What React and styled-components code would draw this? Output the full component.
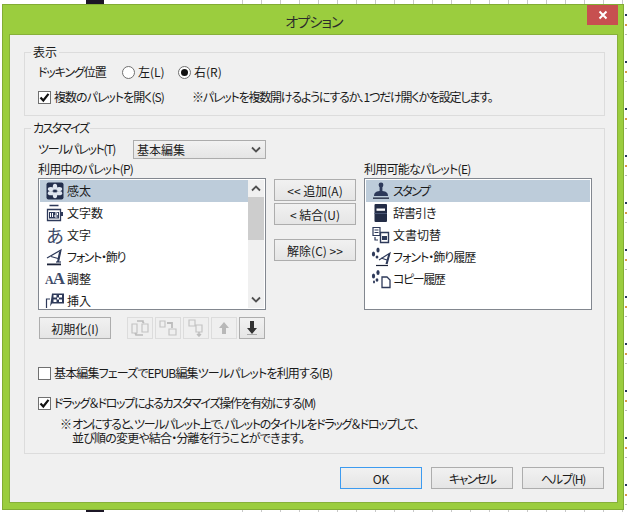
import React from 'react';
import styled, { createGlobalStyle } from 'styled-components';

const Global = createGlobalStyle`
  html, body { margin: 0; padding: 0; background: #fff; }
  * { box-sizing: border-box; }
  body { font-family: "Noto Sans CJK JP", "Noto Sans", sans-serif; font-size: 12px; color: #1a1a1a; font-feature-settings: "palt"; }
`;

const Page = styled.div`
  width: 627px; height: 512px; overflow: hidden;
  padding: 4px 3px 2px 2px;
  background:
    linear-gradient(#1c1626, #1c1626) 86px 0 / 18px 100% no-repeat,
    repeating-linear-gradient(180deg, #fff 0 14px, #2a3a60 14px 16px, #fff 16px 24px, #d69a50 24px 26px, #fff 26px 34px, #bbb 34px 35px, #fff 35px 47px) 625px 0 / 2px 100% no-repeat,
    repeating-linear-gradient(90deg, #c8c8c8 0 1px, #fff 1px 19px) 242px 0 / 385px 100% no-repeat,
    #fff;
`;
const Win = styled.div`
  width: 622px; height: 506px;
  background: #9bcd3e;
  border: 1px solid #82ac34;
  display: flex; flex-direction: column;
`;
const TitleBar = styled.div`
  height: 29px; display: flex; justify-content: flex-end; position: relative;
  padding-right: 5px;
`;
const Title = styled.div`
  position: absolute; left: 0; right: 0; top: 6px; text-align: center;
  font-size: 14px; line-height: 20px; color: #2b2b2b; padding-left: 2px; letter-spacing: -.8px;
`;
const Close = styled.div`
  width: 31px; height: 20px; background: #c75050; color: #fff;
  display: flex; align-items: center; justify-content: center;
`;
const Client = styled.div`
  flex: 1; margin: 0 5px 6px 6px; background: #f0f0f0;
  border: 1px solid #87b03a; padding: 10px 12px 0 14px;
  display: flex; flex-direction: column;
`;
const Group = styled.fieldset`
  margin: 0 0 ${p => p.$gap || 0}px; padding: 0 0 ${p => p.$bottom}px 0; border: 1px solid #dcdcdc; min-width: 0;
`;
const GroupBody = styled.div`padding-left: 13px;`;
const Legend = styled.legend`
  margin-left: 6px; padding: 0 2px; line-height: 14px; height: 14px; font-size: 12px;
  letter-spacing: ${p => p.$ls || 0}px;
`;
const Row = styled.div`
  display: flex; align-items: center; height: 18px; margin-top: ${p => p.$top || 0}px;
`;
const Text = styled.span`
  white-space: nowrap; line-height: 14px; margin-left: ${p => p.$left || 0}px;
  letter-spacing: ${p => p.$ls || 0}px;
  display: inline-block; width: ${p => (p.$w ? p.$w + 'px' : 'auto')};
`;
const BoxShape = styled.span`
  width: 13px; height: 13px; flex: none; border: 1px solid #707070; background: #fff;
  display: flex; align-items: center; justify-content: center;
`;
const RadioShape = styled.span`
  width: 13px; height: 13px; flex: none; border-radius: 50%; border: 1px solid #707070; background: #fff;
  display: flex; align-items: center; justify-content: center;
  &::after { content: ""; width: 7px; height: 7px; border-radius: 50%; background: ${p => (p.$on ? '#111' : 'transparent')}; }
`;
const Check = ({ on }) => (
  <BoxShape>
    {on && <svg width="11" height="11" viewBox="0 0 11 11"><path d="M1.5 5.5 L4.3 8.5 L9.5 1.8" fill="none" stroke="#111" strokeWidth="2.2" /></svg>}
  </BoxShape>
);
const Select = styled.div`
  width: 133px; height: 19px; border: 1px solid #acacac;
  background: linear-gradient(#f2f2f2, #e5e5e5); display: flex; align-items: center; justify-content: space-between;
  padding: 0 4px 0 3px; font-size: 12px; color: #222;
`;
const Columns = styled.div`
  display: grid; grid-template-columns: 228px 82px 228px; column-gap: 8px; margin-top: 4px;
`;
const Col = styled.div`display: flex; flex-direction: column;`;
const ColLabel = styled.div`
  height: 14px; line-height: 14px; margin-bottom: 2px; white-space: nowrap;
  letter-spacing: ${p => p.$ls || 0}px;
`;
const ListBox = styled.div`
  height: 132px; background: #fff; border: 1px solid #82878f; padding: 1px; display: flex; overflow: hidden;
`;
const Rows = styled.div`flex: 1; min-width: 0; overflow: hidden;`;
const Item = styled.div`
  height: 22px; display: flex; align-items: center; padding-left: 5px; gap: 2px; flex: none;
  background: ${p => (p.$sel ? '#bdccda' : 'transparent')}; white-space: nowrap;
`;
const IconSlot = styled.span`width: 20px; height: 20px; flex: none; display: flex; align-items: center; justify-content: center;`;
const Glyph = styled.span`
  font-size: ${p => p.$size}px; line-height: 20px; color: #3d4a68; font-family: ${p => p.$font};
  font-weight: ${p => p.$w || 400}; letter-spacing: ${p => p.$ls || 0}px;
`;
const Scroll = styled.div`width: 16px; background: #f0f0f0; display: flex; flex-direction: column; flex: none;`;
const ScrollArrow = styled.div`height: 17px; display: flex; align-items: center; justify-content: center;`;
const Thumb = styled.div`height: 43px; background: #cdcdcd;`;
const ScrollTrack = styled.div`flex: 1;`;
const Btn = styled.div`
  width: ${p => p.$w || 82}px; height: 22px; flex: none;
  border: 1px solid ${p => (p.$def ? '#3d9bf0' : '#adadad')};
  background: linear-gradient(#f1f1f1, #e5e5e5);
  display: flex; align-items: center; justify-content: center; color: #1a1a1a; white-space: nowrap;
  margin-top: ${p => p.$top || 0}px;
  letter-spacing: ${p => p.$ls || 0}px;
`;
const MidCol = styled.div`display: flex; flex-direction: column; padding-top: 17px;`;
const ToolRow = styled.div`display: flex; margin-top: 7px; padding-left: 1px;`;
const ToolBtn = styled.div`
  width: 26px; height: 22px; margin-left: ${p => (p.$first ? 16 : 2)}px;
  border: 1px solid ${p => (p.$on ? '#adadad' : '#dcdcdc')};
  background: ${p => (p.$on ? 'linear-gradient(#f1f1f1,#e5e5e5)' : '#efefef')};
  display: flex; align-items: center; justify-content: center;
`;
const Note = styled.div`
  margin: 5px 0 0 22px; white-space: nowrap;
`;
const NoteLine = styled.div`
  height: 14px; line-height: 14px; padding-left: ${p => p.$left || 0}px; letter-spacing: ${p => p.$ls}px;
`;
const Footer = styled.div`display: flex; justify-content: flex-end; gap: 9px; margin-top: 13px; padding-right: 1px;`;

const N = '#2e3a5a';
const ICONS = {
  flower: <svg width="18" height="18" viewBox="0 0 18 18"><rect x=".5" y=".5" width="17" height="17" rx="2" fill="#232f4d" /><g fill="#dfe6f0"><ellipse cx="9" cy="4.8" rx="2.2" ry="3" /><ellipse cx="9" cy="13.2" rx="2.2" ry="3" /><ellipse cx="4.8" cy="7" rx="3" ry="2.1" /><ellipse cx="13.2" cy="7" rx="3" ry="2.1" /><ellipse cx="4.8" cy="11.2" rx="3" ry="2.1" /><ellipse cx="13.2" cy="11.2" rx="3" ry="2.1" /></g></svg>,
  counter: <svg width="18" height="18" viewBox="0 0 18 18"><path d="M3.5 1.5h9M1.5 5.5h13v11h-13z" fill="#fff" stroke={N} strokeWidth="1.3" /><rect x="3" y="8" width="10" height="6.5" fill={N} /><path d="M4.5 9v4M6.5 9v4M9 9h2.5v2H9v2h2.5" stroke="#fff" fill="none" /><rect x="15" y="8" width="2" height="4" fill={N} /></svg>,
  font: <svg width="18" height="18" viewBox="0 0 18 18"><path d="M1 10 L15 2 L12.5 14 M5 8.5 L12 10.5" fill="none" stroke={N} strokeWidth="1.2" /><path d="M15 2 L12.5 14 L11 14 L13 4z" fill={N} /><path d="M10 14h5" stroke={N} strokeWidth="1.2" /><rect x="1" y="15.5" width="14" height="1.8" fill="#1b2238" /></svg>,
  insert: <svg width="20" height="18" viewBox="0 0 20 18"><path d="M1.5 16.5V7H5M1.5 16.5H10" fill="none" stroke={N} strokeWidth="1.2" /><path d="M7 1.5h12v10H7l-2 3z" fill={N} /><g fill="#fff"><rect x="8.5" y="3" width="3" height="2.5" /><rect x="14" y="3" width="3" height="2.5" /><rect x="8.5" y="7.5" width="3" height="2.5" /><rect x="14" y="7.5" width="3" height="2.5" /><rect x="12" y="5.5" width="2" height="2" /></g></svg>,
  stamp: <svg width="20" height="18" viewBox="0 0 20 18"><circle cx="10" cy="3" r="2.4" fill={N} /><rect x="8.6" y="4" width="2.8" height="5" fill={N} /><path d="M3 14c0-4 3-5 7-5s7 1 7 5z" fill={N} /><rect x="2" y="15.5" width="16" height="1.3" fill="#1b2238" /></svg>,
  book: <svg width="18" height="20" viewBox="0 0 18 20"><rect x="2.5" y="1" width="12.5" height="18" rx="1" fill="#232c46" /><rect x="4.5" y="5.5" width="8.5" height="2.3" fill="#fff" /><rect x="2.5" y="10" width="12.5" height="1" fill="#4a5674" /></svg>,
  docs: <svg width="20" height="18" viewBox="0 0 20 18"><path d="M2 1.5h7v8H2z" fill="#fff" stroke={N} strokeWidth="1.2" /><path d="M3.5 4h4M3.5 6.5h4" stroke={N} /><path d="M9.5 6.5h8v10h-8z" fill="#fff" stroke={N} strokeWidth="1.4" /><rect x="11" y="10" width="5" height="4" fill={N} /><path d="M4 11v3h3" fill="none" stroke={N} strokeWidth="1.2" /></svg>,
  fonthist: <svg width="20" height="20" viewBox="0 0 20 20"><ellipse cx="7" cy="3" rx="1.6" ry="2.6" fill={N} /><ellipse cx="2.5" cy="7" rx="1.6" ry="2.6" fill={N} /><ellipse cx="6" cy="10" rx="1.4" ry="1.6" fill={N} /><path d="M8 13 L19 6 L16 17 M10 11 L16 13" fill="none" stroke={N} strokeWidth="1.2" /><path d="M19 6 L16 17 L14.5 17 L17 8z" fill={N} /><path d="M5 18.5h12" stroke="#1b2238" strokeWidth="1.2" /></svg>,
  copyhist: <svg width="20" height="20" viewBox="0 0 20 20"><ellipse cx="7" cy="3.5" rx="1.6" ry="2.6" fill={N} /><ellipse cx="2.5" cy="7" rx="1.6" ry="2.6" fill={N} /><ellipse cx="6" cy="11" rx="1.4" ry="1.8" fill={N} /><path d="M11 8h5l3 3v7.5h-8z" fill="#fff" stroke={N} strokeWidth="1.3" /><ellipse cx="3" cy="13" rx="1" ry="1.4" fill={N} /></svg>,
};
const Aa = <span><Glyph $size={12} $w={700} $ls={-1} $font={'"Liberation Serif", serif'}>A</Glyph><Glyph $size={17} $w={700} $font={'"Liberation Serif", serif'}>A</Glyph></span>;
const Ah = <Glyph $size={18} $font={'"Noto Sans CJK JP", sans-serif'}>あ</Glyph>;

const left = [
  [ICONS.flower, '感太', 0], [ICONS.counter, '文字数', 0], [Ah, '文字', 0],
  [ICONS.font, 'フォント・飾り', -1.3], [Aa, '調整', 0], [ICONS.insert, '挿入', 0],
];
const right = [
  [ICONS.stamp, 'スタンプ', -1.5], [ICONS.book, '辞書引き', -1], [ICONS.docs, '文書切替', 0],
  [ICONS.fonthist, 'フォント・飾り履歴', -1], [ICONS.copyhist, 'コピー履歴', -1.4],
];
const ListItems = ({ items }) => items.map(([ic, t, ls], i) => (
  <Item key={t} $sel={i === 0}><IconSlot>{ic}</IconSlot><Text $ls={ls}>{t}</Text></Item>
));

const G = '#c4c4c4';
const D = '#bcbcbc';
const tools = [
  <svg width="18" height="18" viewBox="0 0 18 18" fill="none" stroke={G} strokeWidth="1.2"><path d="M1 5h5v9H1zM11 5h6v8h-6z" /><path d="M6 2h6v2M11 2l2 2M12 16H5v-2M5 16l-1-2" stroke={D} strokeWidth="1.6" /></svg>,
  <svg width="18" height="18" viewBox="0 0 18 18" fill="none" stroke={G} strokeWidth="1.2"><path d="M1 2h5v6H1zM10 10h7v6h-7z" /><path d="M8 4h5v5" stroke={D} strokeWidth="1.8" /></svg>,
  <svg width="18" height="18" viewBox="0 0 18 18" fill="none" stroke={G} strokeWidth="1.2"><path d="M2 1h6v6H2zM9 6h6v7H9z" /><path d="M12 13v4M10 15l2 2 2-2" stroke={D} strokeWidth="1.5" /></svg>,
  <svg width="16" height="16" viewBox="0 0 16 16"><path d="M8 2 L13 8H10V14H6V8H3z" fill="#b8b8b8" /></svg>,
  <svg width="16" height="16" viewBox="0 0 16 16"><path d="M6 1h4v7h3l-5 6-5-6h3z" fill="#333" /><rect x="3" y="14" width="10" height="1" fill="#aaa" /></svg>,
];

const Chev = ({ up }) => (
  <svg width="10" height="7" viewBox="0 0 10 7"><path d={up ? 'M1 5.5 L5 1.5 L9 5.5' : 'M1 1.5 L5 5.5 L9 1.5'} fill="none" stroke="#505050" strokeWidth="1.8" /></svg>
);

export default function App() {
  return (
    <Page>
      <Global />
      <Win>
        <TitleBar>
          <Title>オプション</Title>
          <Close>
            <svg width="10" height="10" viewBox="0 0 10 10"><path d="M1.5 1.5 L8.5 8.5 M8.5 1.5 L1.5 8.5" stroke="#fff" strokeWidth="2" /></svg>
          </Close>
        </TitleBar>
        <Client>
          <Group $gap={5} $bottom={9}>
            <Legend>表示</Legend>
            <GroupBody>
              <Row $top={4}>
                <Text $w={84} $ls={-1.1}>ドッキング位置</Text>
                <RadioShape /><Text $left={3} $w={40}>左(L)</Text>
                <RadioShape $on /><Text $left={3}>右(R)</Text>
              </Row>
              <Row $top={7}>
                <Check on /><Text $left={3} $w={138} $ls={-1}>複数のパレットを開く(S)</Text>
                <Text $ls={-1.2}>※パレットを複数開けるようにするか、1つだけ開くかを設定します。</Text>
              </Row>
            </GroupBody>
          </Group>
          <Group $bottom={8}>
            <Legend $ls={-1.5}>カスタマイズ</Legend>
            <GroupBody>
              <Row $top={5}>
                <Text $w={95} $ls={-1.3}>ツールパレット(T)</Text>
                <Select>基本編集<Chev /></Select>
              </Row>
              <Columns>
                <Col>
                  <ColLabel $ls={-0.8}>利用中のパレット(P)</ColLabel>
                  <ListBox>
                    <Rows><ListItems items={left} /></Rows>
                    <Scroll>
                      <ScrollArrow><Chev up /></ScrollArrow>
                      <Thumb />
                      <ScrollTrack />
                      <ScrollArrow><Chev /></ScrollArrow>
                    </Scroll>
                  </ListBox>
                  <ToolRow>
                    <Btn $w={72}>初期化(I)</Btn>
                    {tools.map((t, i) => <ToolBtn key={i} $first={i === 0} $on={i === 4}>{t}</ToolBtn>)}
                  </ToolRow>
                </Col>
                <MidCol>
                  <Btn>&lt;&lt; 追加(A)</Btn>
                  <Btn $top={2}>&lt; 結合(U)</Btn>
                  <Btn $top={14}>解除(C) &gt;&gt;</Btn>
                </MidCol>
                <Col>
                  <ColLabel $ls={-0.75}>利用可能なパレット(E)</ColLabel>
                  <ListBox><Rows><ListItems items={right} /></Rows></ListBox>
                </Col>
              </Columns>
              <Row $top={25}>
                <Check /><Text $left={3} $ls={-0.85}>基本編集フェーズでEPUB編集ツールパレットを利用する(B)</Text>
              </Row>
              <Row $top={12}>
                <Check on /><Text $left={3} $ls={-1.3}>ドラッグ＆ドロップによるカスタマイズ操作を有効にする(M)</Text>
              </Row>
              <Note>
                <NoteLine $ls={-1.3}>※ オンにすると、ツールパレット上で、パレットのタイトルをドラッグ＆ドロップして、</NoteLine>
                <NoteLine $left={12} $ls={-0.8}>並び順の変更や結合・分離を行うことができます。</NoteLine>
              </Note>
            </GroupBody>
          </Group>
          <Footer>
            <Btn $def>OK</Btn>
            <Btn $ls={-1.6}>キャンセル</Btn>
            <Btn $ls={-1.2}>ヘルプ(H)</Btn>
          </Footer>
        </Client>
      </Win>
    </Page>
  );
}
